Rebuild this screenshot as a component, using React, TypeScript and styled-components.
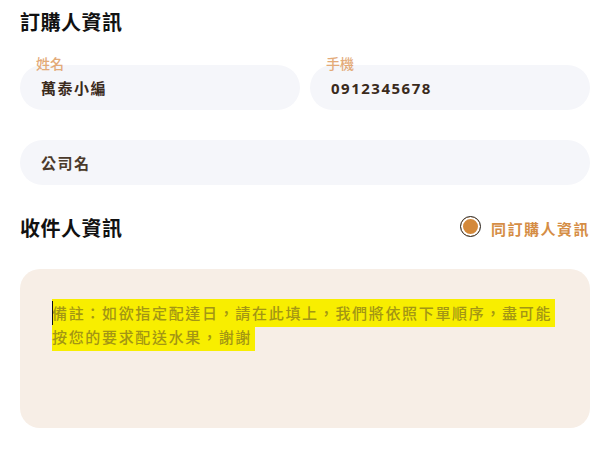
import styled, { createGlobalStyle } from 'styled-components';

const GlobalStyle = createGlobalStyle`
    body {
        margin: 0;
        background: #ffffff;
        font-family: "Noto Sans", "Noto Sans CJK TC", sans-serif;
    }
`

const Page = styled.div`
    width: 613px;
    box-sizing: border-box;
    padding: 8px 23px 0 20px;
`

const Title = styled.h2`
    margin: 0;
    font-family: "Noto Sans CJK TC", sans-serif;
    font-size: 20px;
    line-height: 28px;
    font-weight: 700;
    letter-spacing: 0.5px;
    color: #111111;
`

const Row = styled.div<{ $top: number }>`
    display: grid;
    grid-template-columns: 1fr 1fr;
    gap: 10px;
    margin-top: ${({ $top }) => $top}px;
`

const Field = styled.div<{ $full?: boolean }>`
    position: relative;
    grid-column: ${({ $full }) => ($full ? '1 / -1' : 'auto')};
    height: 45px;
    border-radius: 23px;
    background: #f5f6fa;
    display: flex;
    align-items: center;
    padding-left: 21px;
`

const Label = styled.span`
    position: absolute;
    left: 16px;
    top: -11px;
    font-size: 14px;
    line-height: 20px;
    font-weight: 500;
    color: #e3aa78;
`

const Value = styled.span<{ $muted?: boolean }>`
    font-size: 15px;
    font-weight: 700;
    letter-spacing: 1.5px;
    color: ${({ $muted }) => ($muted ? '#4b3a2b' : '#3a2a1c')};
`

const Header = styled.div`
    display: flex;
    align-items: center;
    justify-content: space-between;
    margin-top: 29px;
`

const SameAs = styled.label`
    display: flex;
    align-items: center;
    gap: 10px;
    font-size: 15px;
    font-weight: 700;
    letter-spacing: 1.5px;
    color: #d58d45;
`

const Radio = styled.span`
    width: 21px;
    height: 21px;
    box-sizing: border-box;
    border-radius: 50%;
    border: 1.5px solid #2e2e2e;
    background: #d4893a;
    box-shadow: inset 0 0 0 2px #ffffff;
    margin-top: -3px;
`

const Note = styled.div`
    margin-top: 27px;
    height: 159px;
    box-sizing: border-box;
    border-radius: 20px;
    background: #f7eee6;
    padding: 32px 32px 0 32px;
    font-size: 15px;
    font-weight: 500;
    line-height: 24px;
    letter-spacing: 1.67px;
`

const Caret = styled.span`
    display: inline-block;
    position: relative;
    z-index: 1;
    width: 1px;
    height: 24px;
    margin-right: -1px;
    vertical-align: top;
    background: #111111;
`

const Marked = styled.span`
    background: #f8ee00;
    color: #a39614;
    padding: 4px 3px 4px 0;
    -webkit-box-decoration-break: clone;
    box-decoration-break: clone;
`

const App = () => {
    return (
        <Page>
            <GlobalStyle />
            <Title>訂購人資訊</Title>
            <Row $top={29}>
                <Field>
                    <Label>姓名</Label>
                    <Value>萬泰小編</Value>
                </Field>
                <Field>
                    <Label>手機</Label>
                    <Value>0912345678</Value>
                </Field>
            </Row>
            <Row $top={30}>
                <Field $full>
                    <Value $muted>公司名</Value>
                </Field>
            </Row>
            <Header>
                <Title>收件人資訊</Title>
                <SameAs>
                    <Radio />
                    同訂購人資訊
                </SameAs>
            </Header>
            <Note>
                <Caret />
                <Marked>備註：如欲指定配達日，請在此填上，我們將依照下單順序，盡可能按您的要求配送水果，謝謝</Marked>
            </Note>
        </Page>
    );
};

export default App;
